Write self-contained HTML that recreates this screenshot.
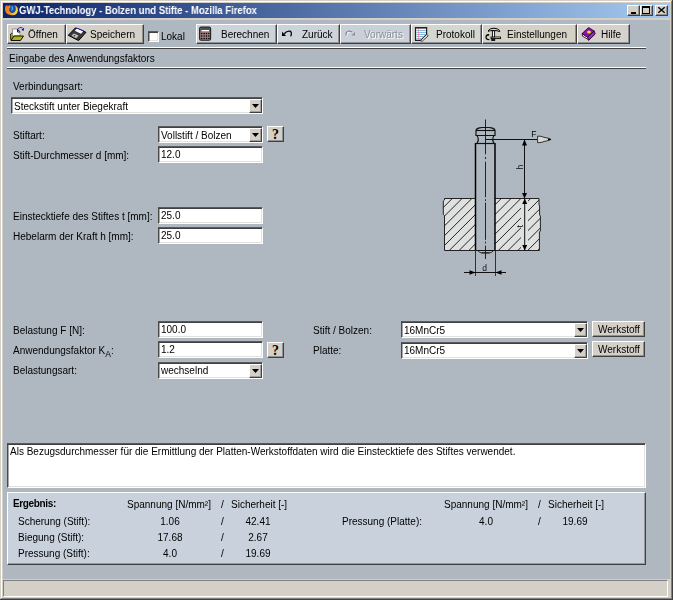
<!DOCTYPE html>
<html><head><meta charset="utf-8">
<style>
*{box-sizing:border-box;margin:0;padding:0}
html,body{width:673px;height:600px;overflow:hidden;background:#D4D0C8}
body{position:relative;font-family:"Liberation Sans",sans-serif;font-size:10px;color:#000}
.a{position:absolute}
.t{position:absolute;white-space:nowrap;line-height:12px;font-size:10px;will-change:transform}
.sunk{position:absolute;border:1px solid;border-color:#5A5A5A #fff #fff #4A4A4A;box-shadow:inset 0 1px #404040,inset 1px 0 #A8A8A8,inset -1px -1px #E4E2DC;background:#fff}
.rais{position:absolute;border:1px solid;border-color:#fff #404040 #404040 #fff;box-shadow:inset -1px -1px #909090;background:#D4D0C8}
.arr{position:absolute;right:0;top:1px;bottom:0;width:13px;border:1px solid;border-color:#fff #404040 #404040 #fff;box-shadow:inset -1px -1px #A0A0A0;background:#D4D0C8}
.arr:after{content:"";position:absolute;left:2px;top:4px;width:7px;height:4px;background:#000;clip-path:polygon(0 0,100% 0,50% 100%)}
.q:after{content:"?";position:absolute;left:4px;top:0;font:bold 14px/15px "Liberation Serif",serif;color:#000}
</style></head><body>
<div class="a" style="left:0px;top:0px;width:673px;height:600px;background:#D4D0C8"></div>
<div class="a" style="left:0px;top:0px;width:672px;height:1px;background:#D4D0C8"></div>
<div class="a" style="left:0px;top:0px;width:1px;height:599px;background:#D4D0C8"></div>
<div class="a" style="left:1px;top:1px;width:670px;height:1px;background:#FFFFFF"></div>
<div class="a" style="left:1px;top:1px;width:1px;height:597px;background:#FFFFFF"></div>
<div class="a" style="left:671px;top:1px;width:1px;height:598px;background:#808080"></div>
<div class="a" style="left:1px;top:598px;width:671px;height:1px;background:#808080"></div>
<div class="a" style="left:672px;top:0px;width:1px;height:600px;background:#404040"></div>
<div class="a" style="left:0px;top:599px;width:673px;height:1px;background:#404040"></div>
<div class="a" style="left:3px;top:3px;width:667px;height:15px;background:linear-gradient(to right,#0A246A,#A6CAF0)"></div>
<div class="t" style="left:19px;top:3px;line-height:15px;font-size:10.5px;font-weight:bold;color:#fff;transform:scaleX(0.905);transform-origin:0 0">GWJ-Technology - Bolzen und Stifte - Mozilla Firefox</div>
<div class="rais" style="left:627px;top:5px;width:13px;height:11px"></div>
<div class="a" style="left:631px;top:12px;width:5px;height:2px;background:#000"></div>
<div class="rais" style="left:640px;top:5px;width:13px;height:11px"></div>
<div class="a" style="left:642px;top:6px;width:8px;height:8px;border:1px solid #000;border-top-width:2px"></div>
<div class="rais" style="left:655px;top:5px;width:13px;height:11px"></div>
<svg class="a" style="left:655px;top:5px" width="13" height="11"><path d="M3.3 2.3 L9.7 7.7 M9.7 2.3 L3.3 7.7" stroke="#000" stroke-width="1.4"/></svg>
<svg class="a" style="left:0;top:0" width="22" height="20" viewBox="0 0 22 20">
<defs><linearGradient id="fx" x1="0" y1="0" x2="1" y2="0.3"><stop offset="0" stop-color="#F07018"/><stop offset="0.6" stop-color="#F09020"/><stop offset="1" stop-color="#F8D840"/></linearGradient></defs>
<circle cx="12.3" cy="8.8" r="3.9" fill="#1850A8"/>
<path d="M11.5 5.5 Q13.5 6.5 13.2 9 Q12.5 11 11 10.5 Q12.2 9 11.5 5.5Z" fill="#58A8E8"/>
<path d="M5.3 6.2 L6.8 4.9 L7.9 6.3 L9.5 4.9 L10.6 6.9 Q8.6 8.2 9.1 10.6 Q10 12.9 12.5 12.9 Q15.6 12.6 15.9 9.1 Q15.9 6.6 14.1 5 Q17.8 5.9 17.9 9.9 Q17.8 15.2 12 15.3 Q6.4 15.2 5.1 10.6 Q4.7 8.2 5.3 6.2Z" fill="url(#fx)"/>
</svg>
<div class="a" style="left:3px;top:20px;width:667px;height:559px;background:#AFB8C1"></div>
<div class="rais" style="left:7px;top:24px;width:59px;height:20px"></div>
<div class="t" style="left:28px;top:29px;">Öffnen</div>
<div class="rais" style="left:66px;top:24px;width:78px;height:20px"></div>
<div class="t" style="left:90px;top:29px;">Speichern</div>
<div class="sunk" style="left:148px;top:31px;width:11px;height:11px"></div>
<div class="t" style="left:161px;top:31px;">Lokal</div>
<div class="rais" style="left:196px;top:24px;width:81px;height:20px;background:#CDD3DA"></div>
<div class="t" style="left:221px;top:29px;">Berechnen</div>
<div class="rais" style="left:277px;top:24px;width:63px;height:20px;background:#CDD3DA"></div>
<div class="t" style="left:302px;top:29px;">Zurück</div>
<div class="rais" style="left:340px;top:24px;width:71px;height:20px;background:#C9D0DA"></div>
<div class="t" style="left:365px;top:30px;color:#fff">Vorwärts</div>
<div class="t" style="left:364px;top:29px;color:#8A9098">Vorwärts</div>
<div class="rais" style="left:411px;top:24px;width:71px;height:20px;background:#D3D7CF"></div>
<div class="t" style="left:436px;top:29px;">Protokoll</div>
<div class="rais" style="left:482px;top:24px;width:95px;height:20px;background:#D4D2C6"></div>
<div class="t" style="left:507px;top:29px;">Einstellungen</div>
<div class="rais" style="left:577px;top:24px;width:53px;height:20px;background:#D6D1CC"></div>
<div class="t" style="left:601px;top:29px;">Hilfe</div>
<!-- toolbar icons -->
<svg class="a" style="left:7px;top:24px" width="20" height="20" viewBox="7 24 20 20">
<path d="M10.5 39.5 V34 L12 33 H13.5 V39 Z" fill="#9C9C10" stroke="#202000" stroke-width="0.8"/>
<path d="M12.5 29 H17.5 L20 31.5 V36 H12.5 Z" fill="#fff" stroke="#808080" stroke-width="0.8"/>
<path d="M17.5 29 V32 H20 M17.8 29.5 L19.5 31.5" stroke="#000" stroke-width="0.9" fill="none"/>
<path d="M11 40.5 L14 36 H23.5 L20.5 40.5 Z" fill="#B4B418" stroke="#101000" stroke-width="1"/>
<path d="M18.2 28.8 Q20 26.7 22.5 28" stroke="#3030D0" stroke-width="1.1" fill="none"/>
<path d="M21.3 29.8 L24.2 27.8 L23.6 31 Z" fill="#0000E0"/>
</svg>
<svg class="a" style="left:66px;top:24px" width="22" height="20" viewBox="66 24 22 20">
<path d="M68.3 35.3 L75.5 27.8 L86 32.3 L78.6 40.6 Z" fill="#3A3A3A" stroke="#000" stroke-width="1"/>
<path d="M74.8 30.8 L77 28.6 L83.2 31.2 L81 33.8 Z" fill="#fff"/>
<path d="M77 28.6 L77.8 27.9 L84 30.5 L83.2 31.2 Z" fill="#1010E0"/>
<path d="M71.5 35.8 L73.8 33.6 L78.5 35.6 L76.2 38.2 Z" fill="#C8C8C8"/>
<path d="M73.3 36 L74.5 34.9 L75.6 35.4 L74.4 36.6 Z" fill="#202020"/>
</svg>
<svg class="a" style="left:196px;top:24px" width="20" height="20" viewBox="196 24 20 20">
<rect x="199.6" y="27.1" width="11" height="13.2" rx="1.6" fill="#9A7A7A" stroke="#202020" stroke-width="1.1"/>
<rect x="200.5" y="28" width="9.2" height="3.6" fill="#505050"/>
<rect x="201.5" y="30" width="7.5" height="1.4" fill="#fff"/>
<g fill="#000"><circle cx="201.7" cy="33.6" r="0.75"/><circle cx="204.1" cy="33.6" r="0.75"/><circle cx="206.5" cy="33.6" r="0.75"/><circle cx="208.9" cy="33.6" r="0.75"/>
<circle cx="201.7" cy="36.1" r="0.75"/><circle cx="204.1" cy="36.1" r="0.75"/><circle cx="206.5" cy="36.1" r="0.75"/><circle cx="208.9" cy="36.1" r="0.75"/>
<circle cx="201.7" cy="38.6" r="0.75"/><circle cx="204.1" cy="38.6" r="0.75"/><circle cx="206.5" cy="38.6" r="0.75"/><circle cx="208.9" cy="38.6" r="0.75"/></g>
</svg>
<svg class="a" style="left:278px;top:24px" width="20" height="20" viewBox="278 24 20 20">
<path d="M282 31.8 V36 H286.2 Z" fill="#000"/>
<path d="M284.2 33.8 Q287 30.6 290 31.2 Q292.2 32 290.8 36.4" stroke="#000" stroke-width="1.3" fill="none"/>
</svg>
<svg class="a" style="left:341px;top:24px" width="20" height="20" viewBox="341 24 20 20">
<path d="M346.2 35.6 Q345.2 32.2 348.5 31.2 Q350.8 30.6 352.6 32.4" stroke="#fff" stroke-width="1.2" fill="none" transform="translate(0.7 0.7)"/>
<path d="M346.2 35.6 Q345.2 32.2 348.5 31.2 Q350.8 30.6 352.6 32.4" stroke="#7E858E" stroke-width="1.2" fill="none"/>
<path d="M351.3 35.6 H355 V31.8 Z" fill="#8E949C"/>
</svg>
<svg class="a" style="left:412px;top:24px" width="20" height="20" viewBox="412 24 20 20">
<path d="M415.5 27.6 H426.6 V34.5 L420.6 40.4 H415.5 Z" fill="#F4F8FC" stroke="#202020" stroke-width="1.2"/>
<path d="M416.4 30.5 H426 M416.4 32.5 H426 M416.4 34.5 H425 M416.4 36.5 H423 M416.4 38.5 H421" stroke="#7FB0E0" stroke-width="0.9"/>
<path d="M418.6 28.3 V40" stroke="#F07868" stroke-width="1" stroke-dasharray="1.2 0.8"/>
<path d="M416 28.4 H426" stroke="#606060" stroke-width="0.8"/>
<path d="M420.4 40.8 L426.8 34.4 L428.2 35.8 L422.2 41.2 Z" fill="#fff" stroke="#202020" stroke-width="0.9"/>
</svg>
<svg class="a" style="left:483px;top:24px" width="20" height="20" viewBox="483 24 20 20">
<path d="M488 31 Q489.5 28.2 494 28.2 Q498.5 28.2 500 31.2 L499.3 31.6 Q497 30.2 494.5 30.6 H490.8 Q489.2 30.8 488.6 31.5 Z" fill="#D8D8D8" stroke="#000" stroke-width="1"/>
<rect x="492.4" y="30.8" width="2.2" height="8.5" fill="#fff" stroke="#000" stroke-width="0.9"/>
<rect x="491" y="37" width="9.5" height="1.6" fill="#fff" stroke="#000" stroke-width="0.9"/>
<path d="M489.2 34.6 Q486 34.6 486 37 Q486 39.6 489.4 39.6" stroke="#000" stroke-width="1.2" fill="none"/>
<path d="M486 35.4 H488.6" stroke="#000" stroke-width="0.9"/>
<rect x="491.2" y="37.6" width="4" height="3.4" fill="#1A1A1A"/>
</svg>
<svg class="a" style="left:578px;top:24px" width="20" height="20" viewBox="578 24 20 20">
<path d="M594.2 31 L595.2 34 L588.6 40.4 L587.6 37.2 Z" fill="#A028B8" stroke="#200030" stroke-width="0.9"/>
<path d="M582 33.6 L587.6 37.2 L588.4 39.6 L582.6 36.2 Z" fill="#fff" stroke="#300040" stroke-width="0.9"/>
<path d="M582 33.6 L588.6 27.6 L594.2 31 L587.6 37.2 Z" fill="#8A14A8" stroke="#300040" stroke-width="0.9"/>
<ellipse cx="589" cy="32" rx="1.9" ry="1.5" fill="#F2E418"/>
</svg>


<div class="a" style="left:7px;top:47px;width:639px;height:1px;background:#fff"></div>
<div class="a" style="left:7px;top:48px;width:639px;height:1px;background:#404040"></div>
<div class="t" style="left:9px;top:53px;">Eingabe des Anwendungsfaktors</div>
<div class="a" style="left:7px;top:67px;width:639px;height:1px;background:#fff"></div>
<div class="a" style="left:7px;top:68px;width:639px;height:1px;background:#404040"></div>
<div class="t" style="left:13px;top:81px;">Verbindungsart:</div>
<div class="sunk" style="left:11px;top:97px;width:252px;height:17px"><div class="arr"></div></div>
<div class="t" style="left:14px;top:101px;">Steckstift unter Biegekraft</div>
<div class="t" style="left:13px;top:130px;">Stiftart:</div>
<div class="sunk" style="left:158px;top:126px;width:105px;height:17px"><div class="arr"></div></div>
<div class="t" style="left:161px;top:130px;">Vollstift / Bolzen</div>
<div class="rais q" style="left:267px;top:126px;width:17px;height:16px"></div>
<div class="t" style="left:13px;top:150px;">Stift-Durchmesser d [mm]:</div>
<div class="sunk" style="left:158px;top:146px;width:105px;height:17px"></div>
<div class="t" style="left:161px;top:149px;">12.0</div>
<div class="t" style="left:13px;top:211px;">Einstecktiefe des Stiftes t [mm]:</div>
<div class="sunk" style="left:158px;top:207px;width:105px;height:17px"></div>
<div class="t" style="left:161px;top:210px;">25.0</div>
<div class="t" style="left:13px;top:231px;">Hebelarm der Kraft h [mm]:</div>
<div class="sunk" style="left:158px;top:227px;width:105px;height:17px"></div>
<div class="t" style="left:161px;top:230px;">25.0</div>
<div class="t" style="left:13px;top:325px;">Belastung F [N]:</div>
<div class="sunk" style="left:158px;top:321px;width:105px;height:17px"></div>
<div class="t" style="left:161px;top:324px;">100.0</div>
<div class="t" style="left:13px;top:345px;">Anwendungsfaktor K<span style="position:relative;top:3px;font-size:8.5px">A</span>:</div>
<div class="sunk" style="left:158px;top:341px;width:105px;height:17px"></div>
<div class="t" style="left:161px;top:344px;">1.2</div>
<div class="rais q" style="left:267px;top:342px;width:17px;height:16px"></div>
<div class="t" style="left:13px;top:365px;">Belastungsart:</div>
<div class="sunk" style="left:158px;top:362px;width:105px;height:17px"><div class="arr"></div></div>
<div class="t" style="left:161px;top:365px;">wechselnd</div>
<div class="t" style="left:313px;top:325px;">Stift / Bolzen:</div>
<div class="sunk" style="left:401px;top:321px;width:187px;height:17px"><div class="arr"></div></div>
<div class="t" style="left:404px;top:325px;">16MnCr5</div>
<div class="rais" style="left:592px;top:321px;width:53px;height:16px"></div>
<div class="t" style="left:598px;top:324px;">Werkstoff</div>
<div class="t" style="left:313px;top:345px;">Platte:</div>
<div class="sunk" style="left:401px;top:342px;width:187px;height:17px"><div class="arr"></div></div>
<div class="t" style="left:404px;top:345px;">16MnCr5</div>
<div class="rais" style="left:592px;top:341px;width:53px;height:16px"></div>
<div class="t" style="left:598px;top:344px;">Werkstoff</div>
<!-- drawing -->
<svg class="a" style="left:430px;top:110px;will-change:transform" width="130" height="180" viewBox="430 110 130 180">
<defs><clipPath id="pl"><path d="M444.5 198.5 H539 V205 L539.6 206 V215 L540.4 216 V231 L539.4 232 V250.5 H444.5 V215.5 L443.3 214.5 V201 L444.5 200 Z"/></clipPath></defs>
<path d="M444.5 198.5 H539 V205 L539.6 206 V215 L540.4 216 V231 L539.4 232 V250.5 H444.5 V215.5 L443.3 214.5 V201 L444.5 200 Z" fill="#DFE0E0"/>
<g clip-path="url(#pl)" stroke="#222" stroke-width="1"><line x1="390.75" y1="260" x2="460.75" y2="190"/><line x1="400.54999999999995" y1="260" x2="470.54999999999995" y2="190"/><line x1="410.3499999999999" y1="260" x2="480.3499999999999" y2="190"/><line x1="420.14999999999986" y1="260" x2="490.14999999999986" y2="190"/><line x1="429.9499999999998" y1="260" x2="499.9499999999998" y2="190"/><line x1="439.7499999999998" y1="260" x2="509.7499999999998" y2="190"/><line x1="449.5499999999997" y1="260" x2="519.5499999999997" y2="190"/><line x1="459.3499999999997" y1="260" x2="529.3499999999997" y2="190"/><line x1="469.14999999999964" y1="260" x2="539.1499999999996" y2="190"/><line x1="478.9499999999996" y1="260" x2="548.9499999999996" y2="190"/><line x1="488.74999999999955" y1="260" x2="558.7499999999995" y2="190"/><line x1="498.5499999999995" y1="260" x2="568.5499999999995" y2="190"/><line x1="508.34999999999945" y1="260" x2="578.3499999999995" y2="190"/><line x1="518.1499999999994" y1="260" x2="588.1499999999994" y2="190"/><line x1="527.9499999999994" y1="260" x2="597.9499999999994" y2="190"/><line x1="537.7499999999993" y1="260" x2="607.7499999999993" y2="190"/></g>
<rect x="521" y="199.5" width="7" height="50.5" fill="#DFE0E0"/>
<path d="M444.5 198.5 H539 V205 L539.6 206 V215 L540.4 216 V231 L539.4 232 V250.5 H444.5 V215.5 L443.3 214.5 V201 L444.5 200 Z" fill="none" stroke="#222" stroke-width="1"/>
<rect x="475.5" y="143" width="19.5" height="107.5" fill="#AFB8C1"/>
<path d="M475.5 143 V250.5 M495 143 V250.5" stroke="#000" stroke-width="1.5"/>
<path d="M476 143.5 H494.5" stroke="#111" stroke-width="1.2"/>
<path d="M476 135.5 V131 Q476 128.5 479.5 127.9 L482 127.5 H489 L491.5 127.9 Q495 128.5 495 131 V135.5 Z" fill="#AFB8C1" stroke="#111" stroke-width="1.2"/>
<path d="M476 130.5 H495" stroke="#111" stroke-width="1.1"/>
<path d="M477 135.5 Q479.6 139.5 476.8 143.5 M494 135.5 Q491.4 139.5 494.2 143.5" fill="none" stroke="#111" stroke-width="1.2"/>
<path d="M475.5 250.5 H495.5" stroke="#111" stroke-width="1"/><path d="M477.5 250.3 Q479 252.6 481.5 252.9 H489.5 Q492 252.6 493.5 250.6" fill="none" stroke="#222" stroke-width="0.9"/>
<path d="M481.5 252.9 H489.5" stroke="#111" stroke-width="0.9"/>
<path d="M485.5 119.5 V154.3 M485.5 157 V159 M485.5 161.7 V197.2 M485.5 199.3 V201 M485.5 202.6 V239.8 M485.5 241.6 V243.4 M485.5 245.6 V259" stroke="#111" stroke-width="0.9"/>
<path d="M485.4 139.5 H537.5" stroke="#111" stroke-width="1"/>
<path d="M537.6 136.1 L541 136.3 L544 137.3 L548.5 138.3 L551 139.4 L548.5 140.5 L544 141.5 L541 142.5 L537.6 142.7 Z" fill="#D8D8D8" stroke="#222" stroke-width="0.9"/><path d="M548 138.2 L551.5 139.4 L548 140.6 Z" fill="#000"/>
<path d="M524.5 139.5 V198.5 M524.7 198.5 V250.5" stroke="#111" stroke-width="1"/>
<path d="M524.5 139.5 L522 145.5 H527 Z M524.5 198.5 L522 193 H527 Z M524.7 198.5 L522.2 204 H527.2 Z M524.7 250.5 L522.2 245 H527.2 Z" fill="#000"/>
<path d="M475.5 250.5 V276 M495.5 250.5 V276" stroke="#222" stroke-width="0.9"/>
<path d="M464 272.5 H506" stroke="#111" stroke-width="1"/>
<path d="M475.5 272.5 L469.5 270.2 V274.8 Z M495.5 272.5 L501.5 270.2 V274.8 Z" fill="#000"/>
<text x="531.3" y="136.5" font-family="Liberation Sans" font-size="8.5" fill="#000">F</text>
<text x="482.3" y="270.8" font-family="Liberation Sans" font-size="8.5" fill="#111">d</text>
<text transform="translate(522.8 169.5) rotate(-90)" font-family="Liberation Sans" font-size="8.5" fill="#111">h</text>
<text transform="translate(522.8 227.5) rotate(-90)" font-family="Liberation Sans" font-size="9" fill="#000">t</text>
</svg>


<div class="sunk" style="left:7px;top:443px;width:639px;height:45px"></div>
<div class="t" style="left:10px;top:446px;">Als Bezugsdurchmesser für die Ermittlung der Platten-Werkstoffdaten wird die Einstecktiefe des Stiftes verwendet.</div>
<div class="a" style="left:7px;top:492px;width:639px;height:73px;background:#C9D2DC;border:1px solid;border-color:#fff #404040 #404040 #fff;box-shadow:inset -1px -1px #999"></div>
<div class="t" style="left:13px;top:498px;font-weight:bold;letter-spacing:-0.35px">Ergebnis:</div>
<div class="t" style="left:127px;top:499px;">Spannung [N/mm²]</div>
<div class="t" style="left:221px;top:499px;">/</div>
<div class="t" style="left:231px;top:499px;">Sicherheit [-]</div>
<div class="t" style="left:18px;top:516px;">Scherung (Stift):</div>
<div class="t" style="left:120px;top:516px;width:100px;text-align:center">1.06</div>
<div class="t" style="left:221px;top:516px;">/</div>
<div class="t" style="left:208px;top:516px;width:100px;text-align:center">42.41</div>
<div class="t" style="left:18px;top:532px;">Biegung (Stift):</div>
<div class="t" style="left:120px;top:532px;width:100px;text-align:center">17.68</div>
<div class="t" style="left:221px;top:532px;">/</div>
<div class="t" style="left:208px;top:532px;width:100px;text-align:center">2.67</div>
<div class="t" style="left:18px;top:548px;">Pressung (Stift):</div>
<div class="t" style="left:120px;top:548px;width:100px;text-align:center">4.0</div>
<div class="t" style="left:221px;top:548px;">/</div>
<div class="t" style="left:208px;top:548px;width:100px;text-align:center">19.69</div>
<div class="t" style="left:444px;top:499px;">Spannung [N/mm²]</div>
<div class="t" style="left:538px;top:499px;">/</div>
<div class="t" style="left:548px;top:499px;">Sicherheit [-]</div>
<div class="t" style="left:342px;top:516px;">Pressung (Platte):</div>
<div class="t" style="left:436px;top:516px;width:100px;text-align:center">4.0</div>
<div class="t" style="left:538px;top:516px;">/</div>
<div class="t" style="left:525px;top:516px;width:100px;text-align:center">19.69</div>
<div class="a" style="left:3px;top:580px;width:665px;height:17px;background:#D4D0C8;border:1px solid;border-color:#808080 #fff #fff #808080"></div>
</body></html>
